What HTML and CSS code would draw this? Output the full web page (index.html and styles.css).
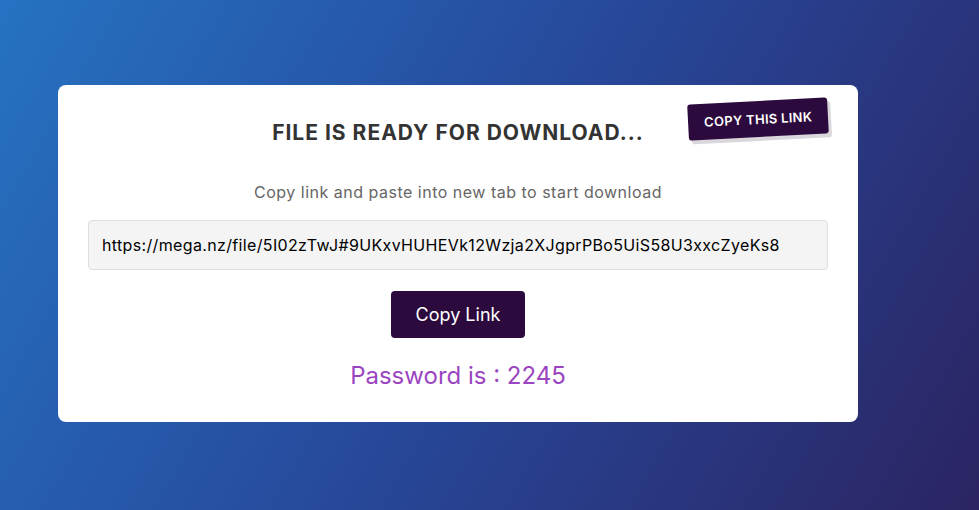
FILE: index.html
```html
<!DOCTYPE html>
<html lang="en">
<head>
<meta charset="utf-8">
<title>File is ready for download</title>
<link rel="stylesheet" href="styles.css">
</head>
<body>
<div class="page">
  <div class="card">
    <div class="badge">COPY THIS LINK</div>
    <h1 class="title">FILE IS READY FOR DOWNLOAD...</h1>
    <p class="subtitle">Copy link and paste into new tab to start download</p>
    <div class="link-box">https://mega.nz/file/5I02zTwJ#9UKxvHUHEVk12Wzja2XJgprPBo5UiS58U3xxcZyeKs8</div>
    <button class="copy-btn">Copy Link</button>
    <p class="password">Password is : 2245</p>
  </div>
</div>
</body>
</html>
```
FILE: styles.css
```css
html, body {
  margin: 0;
  padding: 0;
}
body {
  width: 979px;
  height: 510px;
  overflow: hidden;
  background: linear-gradient(120deg, #2672c2 0%, #27489a 50%, #2b2462 100%);
  font-family: Inter, "Open Sans", sans-serif;
}
.page {
  padding: 85px 0 0 58px;
}
.card {
  position: relative;
  box-sizing: border-box;
  width: 800px;
  height: 337px;
  background: #fff;
  border-radius: 8px;
  padding: 33px 30px 28px;
  display: flex;
  flex-direction: column;
  align-items: center;
}
.badge {
  position: absolute;
  top: 16px;
  right: 30px;
  background: #2d0a3e;
  color: #fff;
  font-size: 13px;
  font-weight: 600;
  letter-spacing: 0.3px;
  padding: 10px 16px;
  border-radius: 3px;
  transform: rotate(-3deg);
  box-shadow: 3px 4px 0 #d9d6dc;
}
.title {
  margin: 0;
  font-size: 21px;
  line-height: 30px;
  font-weight: 700;
  letter-spacing: 1px;
  color: #333;
}
.subtitle {
  margin: 32px 0 0;
  font-size: 16px;
  line-height: 24px;
  letter-spacing: 0.5px;
  color: #666;
}
.link-box {
  box-sizing: border-box;
  width: 740px;
  height: 50px;
  margin-top: 16px;
  padding: 0 13px;
  display: flex;
  align-items: center;
  background: #f4f4f4;
  border: 1px solid #dedede;
  border-radius: 4px;
  font-size: 16px;
  letter-spacing: 0.35px;
  color: #000;
}
.copy-btn {
  margin-top: 21px;
  width: 134px;
  height: 47px;
  border: none;
  border-radius: 4px;
  background: #2d0a3e;
  color: #fff;
  font-family: inherit;
  font-size: 18px;
}
.password {
  margin: 20px 0 0;
  font-size: 24px;
  line-height: 36px;
  color: #9b45c0;
}
```
